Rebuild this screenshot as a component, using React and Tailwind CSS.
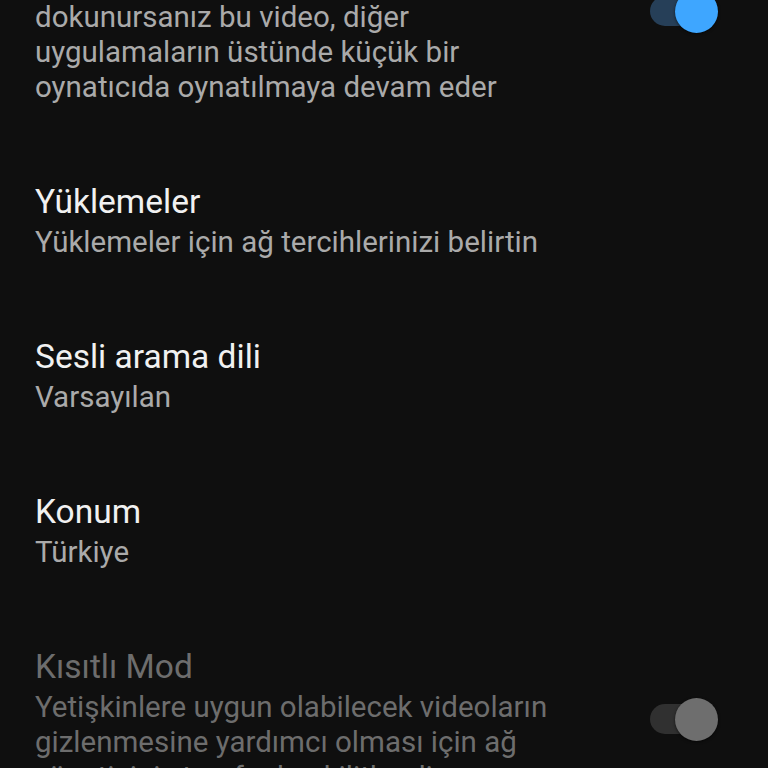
const ITEMS = [
  { title: "Yüklemeler", body: ["Yüklemeler için ağ tercihlerinizi belirtin"] },
  { title: "Sesli arama dili", body: ["Varsayılan"] },
  { title: "Konum", body: ["Türkiye"] },
];

function Toggle({ on, disabled }) {
  return (
    <div className="relative h-[43px] w-[68px] shrink-0">
      <div
        className={
          "absolute left-[0px] top-[6px] h-[30px] w-[60px] rounded-full " +
          (on ? "bg-[#263f58]" : "bg-[#303030]")
        }
      />
      <div
        className={
          "absolute right-[0px] top-[0px] h-[43px] w-[43px] rounded-full shadow-[0_1px_3px_rgba(0,0,0,0.6)] " +
          (on ? "bg-[#3ea6ff]" : disabled ? "bg-[#6e6e6e]" : "bg-[#bdbdbd]")
        }
      />
    </div>
  );
}

function Row({ title, body, muted, toggle }) {
  return (
    <div className="flex items-center justify-between pb-[36px] pl-[35px] pr-[50px] pt-[37px]">
      <div className="min-w-0">
        <div
          className={
            "text-[33.5px] leading-[47px] " +
            (muted ? "text-[#6d6d6d]" : "text-[#f1f1f1]")
          }
        >
          {title}
        </div>
        {body.map((line) => (
          <div
            key={line}
            className={
              "whitespace-nowrap text-[29.5px] leading-[35px] " +
              (muted ? "text-[#6d6d6d]" : "text-[#aaaaaa]")
            }
          >
            {line}
          </div>
        ))}
      </div>
      {toggle}
    </div>
  );
}

export default function App() {
  return (
    <div
      className="h-[768px] w-[768px] overflow-hidden bg-[#0f0f0f]"
      style={{ fontFamily: "Roboto, 'Noto Sans', sans-serif" }}
    >
      <div className="mt-[-119px]">
        <Row
          title="Resim içinde resim"
          body={[
            "Bir video izlerken ana sayfa düğmesine",
            "dokunursanız bu video, diğer",
            "uygulamaların üstünde küçük bir",
            "oynatıcıda oynatılmaya devam eder",
          ]}
          toggle={<Toggle on />}
        />
        {ITEMS.map((item) => (
          <Row key={item.title} title={item.title} body={item.body} />
        ))}
        <Row
          muted
          title="Kısıtlı Mod"
          body={[
            "Yetişkinlere uygun olabilecek videoların",
            "gizlenmesine yardımcı olması için ağ",
            "yöneticiniz tarafından kilitlendi",
          ]}
          toggle={<Toggle disabled />}
        />
      </div>
    </div>
  );
}
